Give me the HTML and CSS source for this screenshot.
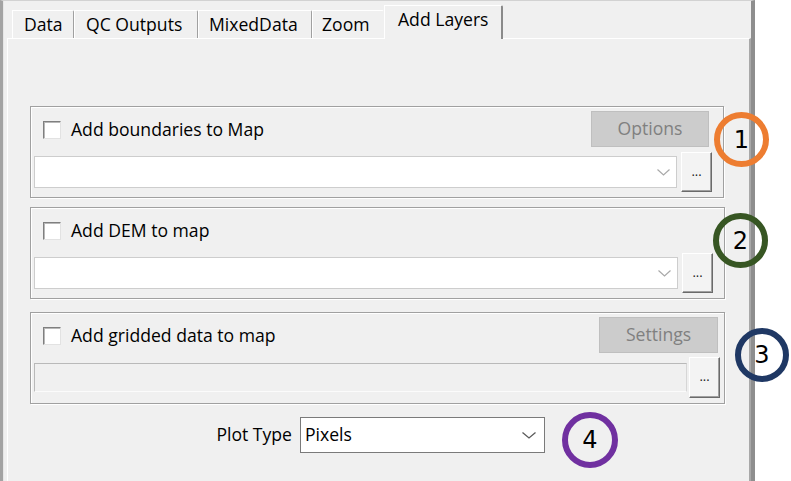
FILE: index.html
```html
<!DOCTYPE html>
<html>
<head>
<meta charset="utf-8">
<link rel="stylesheet" href="styles.css">
</head>
<body>
<div class="screen">
  <div class="window">
    <div class="tabstrip">
      <div class="tab tab-data">Data</div>
      <div class="tab tab-qc">QC Outputs</div>
      <div class="tab tab-mixed">MixedData</div>
      <div class="tab tab-zoom">Zoom</div>
      <div class="tab tab-active">Add Layers</div>
    </div>
    <div class="tabpage">
      <div class="group">
        <div class="row-top row-top-1">
          <div class="check"><span class="box"></span><span>Add boundaries to Map</span></div>
          <div class="btn-flat">Options</div>
        </div>
        <div class="row-bottom">
          <div class="combo">
            <svg class="chev" width="13" height="7" viewBox="0 0 13 7"><path d="M0.5 0.5 L6.5 6 L12.5 0.5" fill="none" stroke="#a9a9a9" stroke-width="1.2"/></svg>
          </div>
          <div class="btn-dots">...</div>
        </div>
      </div>

      <div class="group group-2">
        <div class="row-top">
          <div class="check"><span class="box"></span><span>Add DEM to map</span></div>
        </div>
        <div class="row-bottom">
          <div class="combo">
            <svg class="chev" width="13" height="7" viewBox="0 0 13 7"><path d="M0.5 0.5 L6.5 6 L12.5 0.5" fill="none" stroke="#a9a9a9" stroke-width="1.2"/></svg>
          </div>
          <div class="btn-dots">...</div>
        </div>
      </div>

      <div class="group group-3">
        <div class="row-top row-top-3">
          <div class="check"><span class="box"></span><span>Add gridded data to map</span></div>
          <div class="btn-flat btn-settings">Settings</div>
        </div>
        <div class="row-bottom row-bottom-3">
          <div class="field-disabled"></div>
          <div class="btn-dots btn-dots-3">...</div>
        </div>
      </div>

      <div class="plot-row">
        <span class="plot-label">Plot Type</span>
        <div class="combo combo-plot">
          <span class="combo-text">Pixels</span>
          <svg class="chev" width="14" height="7" viewBox="0 0 14 7"><path d="M0.5 0.5 L7 6 L13.5 0.5" fill="none" stroke="#5a5a5a" stroke-width="1.3"/></svg>
        </div>
      </div>
    </div>
  </div>

  <div class="marker marker-1">1</div>
  <div class="marker marker-2">2</div>
  <div class="marker marker-3">3</div>
  <div class="marker marker-4">4</div>
</div>
</body>
</html>
```

FILE: styles.css
```css
* { box-sizing: border-box; }

body {
  margin: 0;
  background: #ffffff;
  font-family: "Open Sans", "Noto Sans", sans-serif;
  font-size: 17.6px;
  color: #000;
}

.screen {
  position: relative;
  width: 791px;
  height: 481px;
  overflow: hidden;
  background: #ffffff;
}

.window {
  width: 755px;
  height: 481px;
  background: #f0f0f0;
  border-top: 1px solid #d2d2d2;
  border-left: 3px solid #a3a3a3;
  border-right: 4px solid #8e8e8e;
  box-shadow: inset 1px 0 0 #e6e6e6;
  display: flex;
  flex-direction: column;
}

.tabstrip {
  height: 37px;
  display: flex;
  align-items: flex-end;
  padding-left: 9px;
}

.tab {
  height: 28px;
  display: flex;
  align-items: center;
  padding-left: 11px;
  padding-top: 1px;
  border-top: 1px solid #ffffff;
  border-left: 1px solid #ffffff;
  border-right: 1px solid #a0a0a0;
  border-top-right-radius: 2px;
  white-space: nowrap;
  line-height: 1;
}

.tab-data { width: 62px; }
.tab-qc { width: 124px; }
.tab-mixed { width: 114px; padding-left: 10px; }
.tab-zoom { width: 72px; padding-left: 9px; border-right-color: transparent; }

.tab-active {
  position: relative;
  width: 119px;
  height: 34px;
  margin-bottom: -1px;
  padding-left: 13px;
  padding-top: 0;
  padding-bottom: 5px;
  background: #f0f0f0;
  border-right: 2px solid #8a8a8a;
}

.tabpage {
  flex: 1;
  margin-left: 4px;
  border-top: 1px solid #ffffff;
  border-left: 1px solid #ffffff;
  border-right: 2px solid #a8a8a8;
  padding: 67px 0 0 22px;
  display: flex;
  flex-direction: column;
}

.group {
  width: 694px;
  height: 92px;
  border: 1px solid #a0a0a0;
  box-shadow: inset 1px 1px 0 #ffffff, 1px 1px 0 #ffffff;
  padding: 4px 0 0 0;
  display: flex;
  flex-direction: column;
  gap: 5px;
}

.group-2 { margin-top: 9px; width: 695px; }
.group-3 { margin-top: 13px; width: 695px; gap: 4px; }

.row-top {
  height: 36px;
  display: flex;
  align-items: center;
  justify-content: space-between;
}
.row-top-1 { padding-right: 14px; }
.row-top-3 { padding-right: 6px; }

.check {
  display: flex;
  align-items: center;
  gap: 10px;
  padding-left: 12px;
  line-height: 1;
  padding-top: 1px;
}

.box {
  width: 18px;
  height: 18px;
  background: #ffffff;
  border: 1px solid;
  border-color: #7f7f7f #e2e2e2 #e2e2e2 #7f7f7f;
  box-shadow: inset 1px 1px 0 #b8b8b8;
}

.btn-flat {
  width: 118px;
  height: 36px;
  background: #cccccc;
  border: 1px solid #bfbfbf;
  color: #808080;
  display: flex;
  align-items: center;
  justify-content: center;
  line-height: 1;
  padding-bottom: 1px;
}
.btn-settings { width: 119px; }

.row-bottom {
  height: 40px;
  display: flex;
  align-items: center;
  gap: 4px;
  padding: 0 11px 0 3px;
}
.row-bottom-3 {
  height: 41px;
  gap: 2px;
  padding: 0 4px 0 3px;
}

.combo {
  flex: 1;
  height: 32px;
  background: #ffffff;
  border: 1px solid #cdcdcd;
  display: flex;
  align-items: center;
  justify-content: flex-end;
  padding-right: 6px;
}

.chev { display: block; }

.field-disabled {
  flex: 1;
  height: 29px;
  background: #f0f0f0;
  border: 1px solid;
  border-color: #b9b9b9 #d6d6d6 #fbfbfb #b9b9b9;
}

.btn-dots {
  width: 31px;
  height: 100%;
  background: #f3f3f3;
  border: 1px solid;
  border-color: #ffffff #6a6a6a #6a6a6a #ffffff;
  box-shadow: inset -1px -1px 0 #a0a0a0;
  display: flex;
  align-items: center;
  justify-content: center;
  font-size: 13px;
  line-height: 1;
  color: #222;
  padding-bottom: 2px;
}

.plot-row {
  margin-top: 13px;
  display: flex;
  align-items: center;
}

.plot-label {
  width: 270px;
  text-align: right;
  padding-right: 8px;
  line-height: 1;
}

.combo-plot {
  flex: none;
  width: 245px;
  height: 36px;
  border-color: #7a7a7a;
  justify-content: space-between;
  padding: 0 8px 0 4px;
}

.combo-text { line-height: 1; }

.marker {
  position: absolute;
  border-radius: 50%;
  border: 6px solid;
  display: flex;
  align-items: center;
  justify-content: center;
  font-family: "DejaVu Sans", sans-serif;
  font-size: 24px;
  line-height: 1;
  color: #000;
}

.marker-1 { left: 714px; top: 112px; width: 55px; height: 55px; border-color: #ed7d31; }
.marker-2 { left: 713px; top: 213px; width: 55px; height: 55px; border-color: #375623; }
.marker-3 { left: 735px; top: 328px; width: 54px; height: 54px; border-color: #1f3864; }
.marker-4 { left: 562px; top: 412px; width: 56px; height: 56px; border-color: #7030a0; }
```
